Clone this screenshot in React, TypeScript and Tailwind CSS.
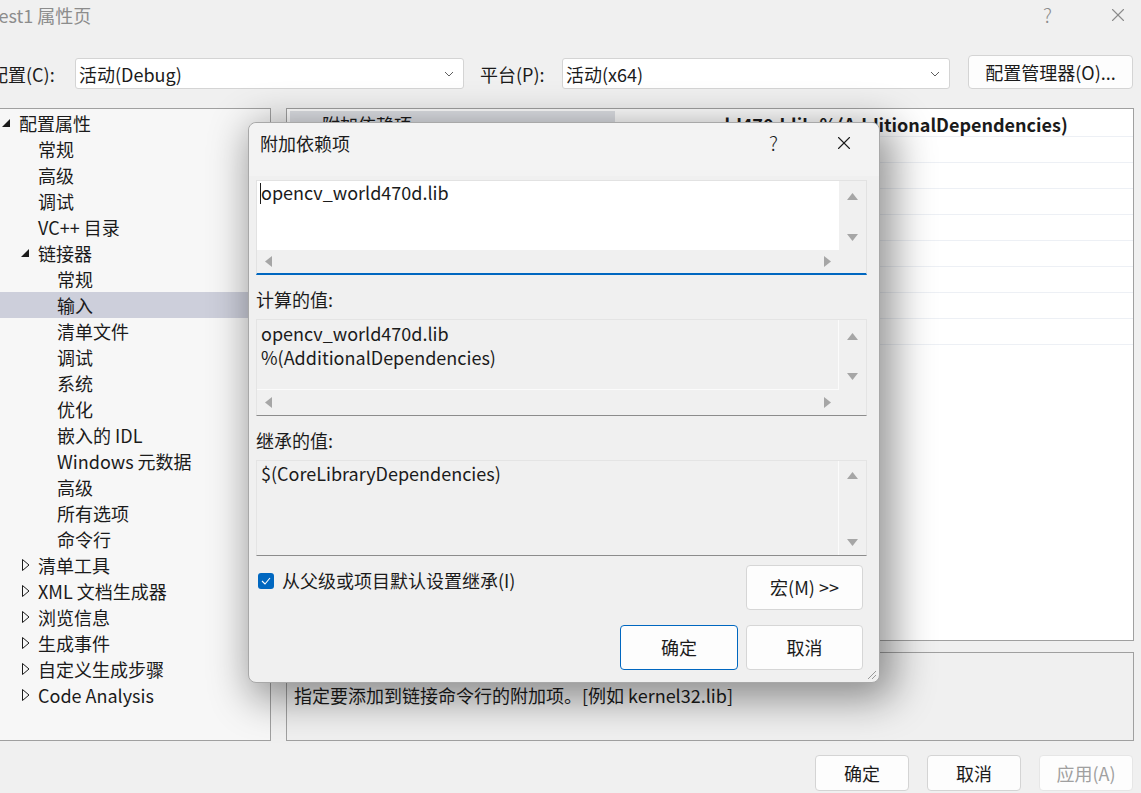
import { X } from 'lucide-react';

type Dir = 'up' | 'down' | 'left' | 'right';

const TREE: { label: string; level: 0 | 1 | 2; arrow?: 'open' | 'closed'; selected?: boolean }[] = [
  { label: '配置属性', level: 0, arrow: 'open' },
  { label: '常规', level: 1 },
  { label: '高级', level: 1 },
  { label: '调试', level: 1 },
  { label: 'VC++ 目录', level: 1 },
  { label: '链接器', level: 1, arrow: 'open' },
  { label: '常规', level: 2 },
  { label: '输入', level: 2, selected: true },
  { label: '清单文件', level: 2 },
  { label: '调试', level: 2 },
  { label: '系统', level: 2 },
  { label: '优化', level: 2 },
  { label: '嵌入的 IDL', level: 2 },
  { label: 'Windows 元数据', level: 2 },
  { label: '高级', level: 2 },
  { label: '所有选项', level: 2 },
  { label: '命令行', level: 2 },
  { label: '清单工具', level: 1, arrow: 'closed' },
  { label: 'XML 文档生成器', level: 1, arrow: 'closed' },
  { label: '浏览信息', level: 1, arrow: 'closed' },
  { label: '生成事件', level: 1, arrow: 'closed' },
  { label: '自定义生成步骤', level: 1, arrow: 'closed' },
  { label: 'Code Analysis', level: 1, arrow: 'closed' },
];

const INDENT = ['pl-[2px]', 'pl-[21px]', 'pl-[40px]'];

const ScrollArrow = ({ dir }: { dir: Dir }) => {
  const vertical = dir === 'up' || dir === 'down';
  const points = {
    up: '0,7 5.5,0 11,7',
    down: '0,0 11,0 5.5,7',
    left: '7,0 7,11 0,5.5',
    right: '0,0 0,11 7,5.5',
  }[dir];
  return (
    <svg
      width={vertical ? 11 : 7}
      height={vertical ? 7 : 11}
      viewBox={vertical ? '0 0 11 7' : '0 0 7 11'}
    >
      <polygon points={points} fill="#a6a6a6" strokeLinejoin="round" />
    </svg>
  );
};

const Chevron = () => (
  <svg width="10" height="6" viewBox="0 0 10 6">
    <polyline points="1,1 5,5 9,1" fill="none" stroke="#5f5f5f" strokeWidth="1" />
  </svg>
);

const TreeArrow = ({ kind }: { kind?: 'open' | 'closed' }) => {
  if (kind === 'open') {
    return (
      <svg width="8" height="8" viewBox="0 0 8 8">
        <polygon points="8,0 8,8 0,8" fill="#1b1b1b" />
      </svg>
    );
  }
  if (kind === 'closed') {
    return (
      <svg width="8" height="12" viewBox="0 0 8 12" className="ml-px">
        <polygon points="0.5,0.5 7,6 0.5,11.5" fill="none" stroke="#1b1b1b" strokeWidth="1" />
      </svg>
    );
  }
  return null;
};

const Button = ({
  children,
  className = '',
}: {
  children: React.ReactNode;
  className?: string;
}) => (
  <div
    className={`flex items-center justify-center rounded-[4px] border bg-[#fdfdfd] ${className}`}
  >
    {children}
  </div>
);

const AdditionalDependenciesDialog = () => (
  <div className="absolute left-[248px] top-[122px] flex h-[561px] w-[632px] flex-col rounded-[8px] border border-[#a8a8a8] bg-[#f0f0f0] shadow-[8px_10px_40px_6px_rgba(0,0,0,0.42)]">
    {/* title bar */}
    <div className="flex h-[53px] items-start rounded-t-[8px] bg-[#f3f3f3]">
      <div className="flex h-[40px] w-full items-center pl-[11px]">
        <span className="leading-[26px]">附加依赖项</span>
        <span className="ml-auto mr-[55px] text-[20px] font-light leading-[26px]">?</span>
        <X className="mr-[24px] h-[22px] w-[22px] text-[#1b1b1b]" strokeWidth={1.2} />
      </div>
    </div>

    <div className="flex flex-1 flex-col pl-[7px] pr-[12px] pt-[4px]">
      {/* editable box */}
      <div className="flex h-[95px] flex-col border border-b-2 border-[#e2e2e2] border-b-[#0067c0] bg-[#f0f0f0]">
        <div className="flex h-[70px]">
          <div className="flex flex-1 items-start bg-white pl-[3px]">
            <span className="mt-[2px] h-[21px] w-px bg-[#1b1b1b]" />
            <span className="-mt-[2px] leading-[26px]">opencv_world470d.lib</span>
          </div>
          <div className="flex w-[27px] flex-col items-center pt-[12px]">
            <ScrollArrow dir="up" />
            <div className="mt-[34px]">
              <ScrollArrow dir="down" />
            </div>
          </div>
        </div>
        <div className="flex h-[23px] items-center">
          <div className="flex w-[584px] items-center justify-between pl-[8px] pr-[10px]">
            <ScrollArrow dir="left" />
            <ScrollArrow dir="right" />
          </div>
        </div>
      </div>

      {/* computed value */}
      <div className="mb-[7px] pt-[11px] leading-[26px]">计算的值:</div>
      <div className="flex h-[97px] flex-col border border-[#e4e4e4] border-b-[#8c8c8c] bg-[#f0f0f0]">
        <div className="flex h-[70px]">
          <div className="flex-1 border-b border-r border-[#fbfbfb] pl-[4px] pt-[1px] leading-[24px]">
            <div>opencv_world470d.lib</div>
            <div>%(AdditionalDependencies)</div>
          </div>
          <div className="flex w-[27px] flex-col items-center pt-[13px]">
            <ScrollArrow dir="up" />
            <div className="mt-[33px]">
              <ScrollArrow dir="down" />
            </div>
          </div>
        </div>
        <div className="flex flex-1 items-center">
          <div className="flex w-[584px] items-center justify-between pl-[8px] pr-[10px]">
            <ScrollArrow dir="left" />
            <ScrollArrow dir="right" />
          </div>
        </div>
      </div>

      {/* inherited value */}
      <div className="mb-[7px] pt-[11px] leading-[26px]">继承的值:</div>
      <div className="flex h-[96px] border border-[#e4e4e4] border-b-[#8c8c8c] bg-[#f0f0f0]">
        <div className="flex-1 border-r border-[#fbfbfb] pl-[4px] leading-[24px]">
          $(CoreLibraryDependencies)
        </div>
        <div className="flex w-[27px] flex-col items-center pt-[11px]">
          <ScrollArrow dir="up" />
          <div className="mt-[60px]">
            <ScrollArrow dir="down" />
          </div>
        </div>
      </div>

      {/* inherit checkbox + macros */}
      <div className="mt-[9px] flex items-start pr-[4px]">
        <div className="mt-[2px] flex items-center">
          <div className="ml-[2px] mt-[2px] flex h-[16px] w-[16px] items-center justify-center rounded-[3px] bg-[#0067c0]">
            <svg width="10" height="8" viewBox="0 0 10 8">
              <polyline points="1,4 4,7 9,1" fill="none" stroke="white" strokeWidth="1.1" />
            </svg>
          </div>
          <span className="ml-[8px] leading-[26px]">从父级或项目默认设置继承(I)</span>
        </div>
        <Button className="ml-auto h-[45px] w-[117px] border-[#d6d6d6]">宏(M) &gt;&gt;</Button>
      </div>

      <div className="mt-[15px] flex justify-end gap-[8px] pr-[4px]">
        <Button className="h-[45px] w-[118px] border-[#0067c0]">确定</Button>
        <Button className="h-[45px] w-[117px] border-[#d6d6d6]">取消</Button>
      </div>
    </div>

    {/* resize grip */}
    <svg width="12" height="12" viewBox="0 0 12 12" className="absolute bottom-[2px] right-[2px]">
      <line x1="11" y1="3" x2="3" y2="11" stroke="#9a9a9a" strokeWidth="1" />
      <line x1="11" y1="7" x2="7" y2="11" stroke="#9a9a9a" strokeWidth="1" />
    </svg>
  </div>
);

export default function App() {
  return (
    <div className="relative h-[793px] w-[1141px] overflow-hidden bg-[#f0f0f0] font-['Noto_Sans_CJK_SC','Noto_Sans',sans-serif] text-[18px] text-[#1b1b1b]">
      {/* window title bar */}
      <div className="flex h-[30px] items-center">
        <span className="-ml-[11px] leading-[26px] text-[#8c8c8c]">Test1 属性页</span>
        <span className="ml-auto mr-[55px] text-[20px] font-light leading-[26px] text-[#8c8c8c]">?</span>
        <X className="mr-[12px] h-[22px] w-[22px] text-[#8c8c8c]" strokeWidth={1.2} />
      </div>

      {/* configuration / platform row */}
      <div className="mt-[25px] flex h-[34px] items-end pr-[8px]">
        <div className="-ml-[10px] flex h-[31px] w-[85px] items-center leading-[26px]">配置(C):</div>
        <div className="flex h-[31px] w-[389px] items-center rounded-[3px] border border-[#d4d4d4] bg-white pl-[3px] pr-[9px]">
          <span className="leading-[26px]">活动(Debug)</span>
          <span className="ml-auto">
            <Chevron />
          </span>
        </div>
        <div className="ml-[16px] flex h-[31px] w-[82px] items-center leading-[26px]">平台(P):</div>
        <div className="flex h-[31px] w-[388px] items-center rounded-[3px] border border-[#d4d4d4] bg-white pl-[3px] pr-[9px]">
          <span className="leading-[26px]">活动(x64)</span>
          <span className="ml-auto">
            <Chevron />
          </span>
        </div>
        <Button className="ml-auto h-[34px] w-[165px] border-[#d4d4d4]">配置管理器(O)...</Button>
      </div>

      {/* main area */}
      <div className="mt-[19px] flex h-[633px] pr-[7px]">
        {/* tree */}
        <div className="-ml-px w-[272px] border border-[#a0a0a0] bg-[#f7f7f7] pt-px">
          {TREE.map((item, i) => (
            <div
              key={i}
              className={`flex h-[26px] items-center ${INDENT[item.level]} ${item.selected ? 'bg-[#cdcfdb]' : ''}`}
            >
              <div className="flex w-[17px] items-center">
                <TreeArrow kind={item.arrow} />
              </div>
              <span className="whitespace-nowrap leading-[26px]">{item.label}</span>
            </div>
          ))}
        </div>

        {/* property grid + description */}
        <div className="ml-[15px] flex flex-1 flex-col">
          <div className="h-[533px] border border-[#a0a0a0] bg-white pt-[2px]">
            <div className="flex h-[26px] border-b border-[#edf0f5]">
              <div className="ml-[3px] w-[325px] bg-[#dfe1e6] pl-[32px] leading-[26px]">附加依赖项</div>
              <div className="whitespace-nowrap font-bold leading-[26px]">
                opencv_world470d.lib;%(AdditionalDependencies)
              </div>
            </div>
            {Array.from({ length: 8 }).map((_, i) => (
              <div key={i} className="h-[26px] border-b border-[#edf0f5]" />
            ))}
          </div>
          <div className="mt-[11px] h-[89px] border border-[#a0a0a0] bg-[#f0f0f0] pl-[7px] pt-[3px]">
            <div className="font-bold leading-[26px]">附加依赖项</div>
            <div className="leading-[26px]">指定要添加到链接命令行的附加项。[例如 kernel32.lib]</div>
          </div>
        </div>
      </div>

      {/* bottom buttons */}
      <div className="mt-[14px] flex justify-end gap-[18px] pr-[8px]">
        <Button className="h-[36px] w-[94px] border-[#d4d4d4]">确定</Button>
        <Button className="h-[36px] w-[94px] border-[#d4d4d4]">取消</Button>
        <Button className="h-[36px] w-[94px] border-[#e6e6e6] bg-[#f6f6f6] text-[#a0a0a0]">应用(A)</Button>
      </div>

      <AdditionalDependenciesDialog />
    </div>
  );
}
